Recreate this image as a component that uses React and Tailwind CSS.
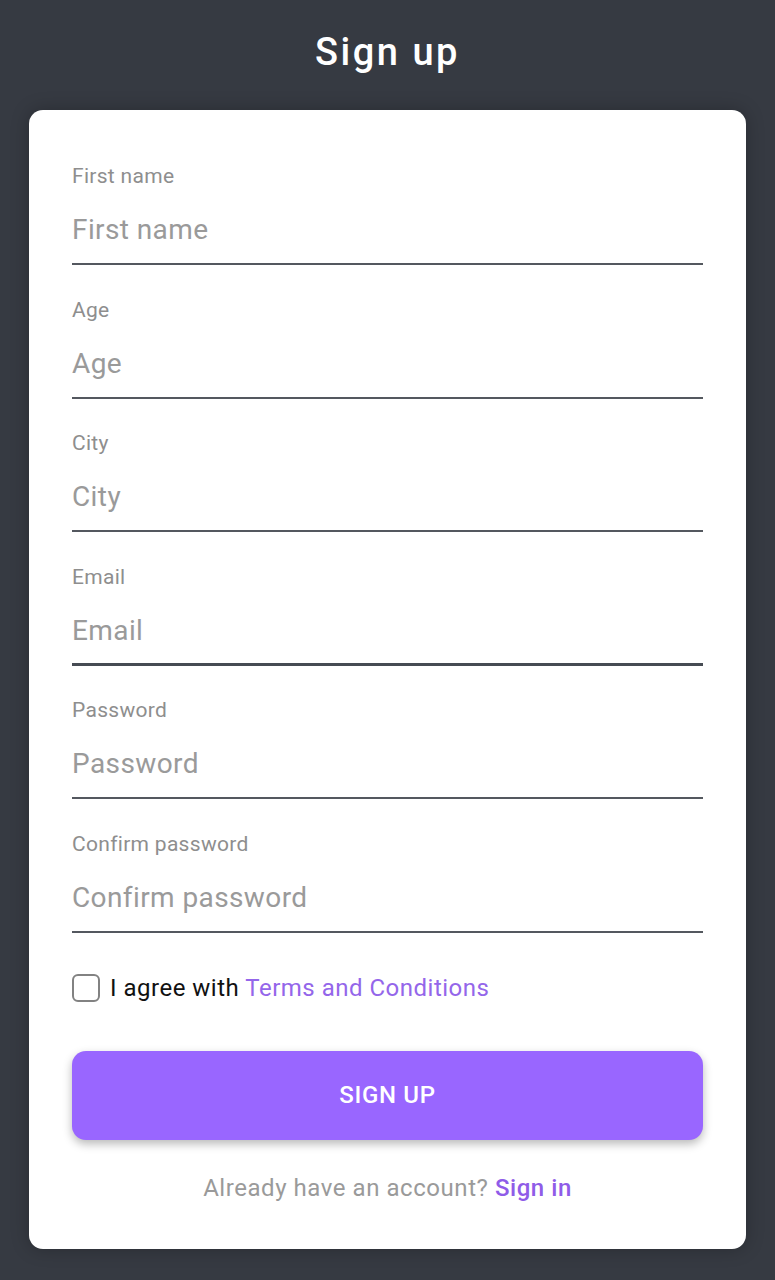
import { useState } from "react";

const fields = [
  { label: "First name", type: "text" },
  { label: "Age", type: "text" },
  { label: "City", type: "text" },
  { label: "Email", type: "email", focused: true },
  { label: "Password", type: "password" },
  { label: "Confirm password", type: "password" },
];

export default function App() {
  const [agree, setAgree] = useState(false);

  return (
    <div className="min-h-screen bg-[#363a42] px-[29px] pb-8 font-['Roboto',sans-serif]">
      {/* Title */}
      <h1 className="pt-[28px] pb-[34px] text-center text-[38px] leading-[48px] font-medium tracking-[2.5px] text-white">
        Sign up
      </h1>

      {/* Card */}
      <div className="rounded-[14px] bg-white px-[43px] pt-[54px] pb-[47px] shadow-[0_0_18px_rgba(0,0,0,0.25)]">
        <div className="flex flex-col gap-[32.5px]">
          {fields.map((f) => (
            <label key={f.label} className="flex flex-col">
              <span className="text-[21px] leading-[24px] tracking-[0.3px] text-[#8e8e8e]">{f.label}</span>
              <input
                type={f.type}
                placeholder={f.label}
                className={
                  f.focused
                    ? "mt-[24px] h-[36px] border-b-[3px] border-[#464b53] pb-[14px] box-content text-[28px] leading-[36px] tracking-[0.4px] text-[#333] placeholder:text-[#9a9a9a] outline-none"
                    : "mt-[24px] h-[36px] border-b-2 border-[#54585f] pb-[15px] box-content text-[28px] leading-[36px] tracking-[0.4px] text-[#333] placeholder:text-[#9a9a9a] outline-none"
                }
              />
            </label>
          ))}
        </div>

        {/* Terms */}
        <div className="mt-[41px] flex items-center gap-[10px]">
          <button
            type="button"
            onClick={() => setAgree(!agree)}
            className="h-[28px] w-[28px] rounded-[6px] border-2 border-[#828282] bg-white"
          />
          <p className="text-[24px] leading-[28px] tracking-[0.5px] text-[#111]">
            I agree with <span className="text-[#9466ea]">Terms and Conditions</span>
          </p>
        </div>

        {/* Button */}
        <button
          type="button"
          className="mt-[49px] h-[89px] w-full rounded-[14px] bg-[#9966ff] text-[24px] font-medium tracking-[0.7px] text-white shadow-[0_4px_10px_rgba(0,0,0,0.28)]"
        >
          SIGN UP
        </button>

        <p className="mt-[34px] text-center text-[24px] leading-[28px] tracking-[0.55px] text-[#9a9a9a]">
          Already have an account? <span className="font-medium text-[#8f5ce8]">Sign in</span>
        </p>
      </div>
    </div>
  );
}
